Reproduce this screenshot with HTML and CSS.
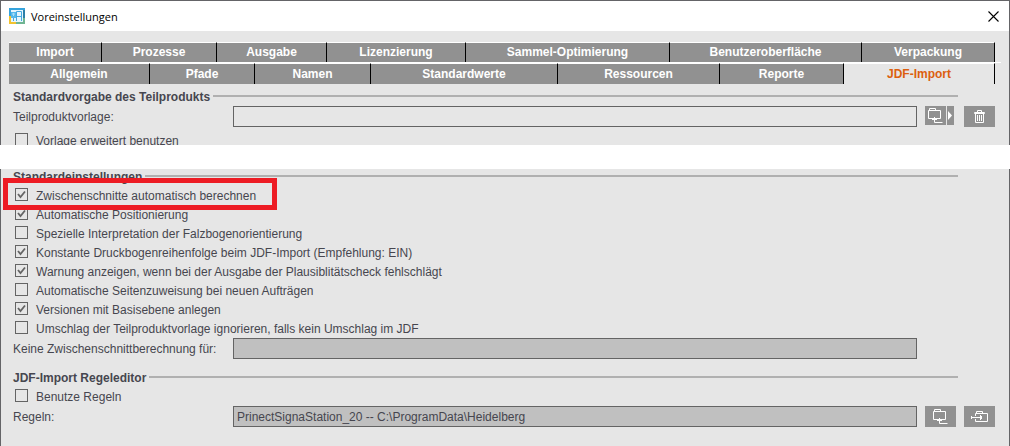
FILE: index.html
```html
<!DOCTYPE html>
<html lang="de">
<head>
    <meta charset="UTF-8">
    <meta name="viewport" content="width=device-width, initial-scale=1.0">
    <title>Voreinstellungen</title>
    <link rel="stylesheet" href="styles.css">
</head>
<body>
    <section class="window window-top">
        <header class="title-bar">
            <svg class="app-icon" width="16" height="16" viewBox="0 0 16 16">
                <path d="M0 0h16v2H2v6H0z" fill="#35a3dc"/>
                <path d="M14 2h2v8h-2z" fill="#2b7fa8"/>
                <path d="M0 8h2v6h5v2H0z" fill="#f2c230"/>
                <path d="M7 14h7v-4h2v6H7z" fill="#6fb592"/>
                <path d="M2 2h12v12H2z" fill="#e4f5fd"/>
                <path d="M2 4h5v6H2z" fill="#53b9ec"/>
                <path d="M7.5 13V3.500h5V13M7.5 8.5h5M4.5 10v3" fill="none" stroke="#45a9df"/>
                <path d="M3 6h3M4.5 5v3" fill="none" stroke="#a9def8"/>
            </svg>
            <h1>Voreinstellungen</h1>
            <button class="close" type="button" aria-label="Schließen">
                <svg width="11" height="11" viewBox="0 0 11 11"><path d="M.5.5l10 10M10.5.5l-10 10" stroke="#000" stroke-width="1.1"/></svg>
            </button>
        </header>

        <nav class="tabs">
            <div class="tab-row tab-row-back">
                <button type="button">Import</button>
                <button type="button">Prozesse</button>
                <button type="button">Ausgabe</button>
                <button type="button">Lizenzierung</button>
                <button type="button">Sammel-Optimierung</button>
                <button type="button">Benutzeroberfläche</button>
                <button type="button">Verpackung</button>
            </div>
            <div class="tab-row tab-row-front">
                <button type="button">Allgemein</button>
                <button type="button">Pfade</button>
                <button type="button">Namen</button>
                <button type="button">Standardwerte</button>
                <button type="button">Ressourcen</button>
                <button type="button">Reporte</button>
                <button type="button" class="active">JDF-Import</button>
            </div>
        </nav>

        <div class="content">
            <h2>Standardvorgabe des Teilprodukts</h2>
            <div class="field">
                <label for="vorlage">Teilproduktvorlage:</label>
                <input type="text" id="vorlage">
                <div class="split-button">
                    <button type="button" aria-label="Vorlage wählen">
                        <svg width="21" height="19" viewBox="0 0 21 19"><path d="M3.5 4.5h12v8h-12zM4.5 4.5v-2h6v2M9.5 11v5.5h8M7 13.5h5"/></svg>
                    </button>
                    <button type="button" class="arrow" aria-label="Verlauf">
                        <svg width="7" height="19" viewBox="0 0 7 19"><path class="solid" d="M1 5l4 4.5L1 14z"/></svg>
                    </button>
                </div>
                <button type="button" class="tool" aria-label="Löschen">
                    <svg width="31" height="21" viewBox="0 0 31 21"><path d="M13.5 6V4.5h4V6M10.5 7.5v-1h10v1zM11.5 8v8.5h8V8M13.5 9v6M15.5 9v6M17.5 9v6"/></svg>
                </button>
            </div>
            <div class="cut-off">
                <label class="check"><input type="checkbox">Vorlage erweitert benutzen</label>
            </div>
        </div>
    </section>

    <section class="window window-bottom">
        <div class="content">
            <h2>Standardeinstellungen</h2>
            <label class="check highlight"><input type="checkbox" checked>Zwischenschnitte automatisch berechnen</label>
            <label class="check"><input type="checkbox" checked>Automatische Positionierung</label>
            <label class="check"><input type="checkbox">Spezielle Interpretation der Falzbogenorientierung</label>
            <label class="check"><input type="checkbox" checked>Konstante Druckbogenreihenfolge beim JDF-Import (Empfehlung: EIN)</label>
            <label class="check"><input type="checkbox" checked>Warnung anzeigen, wenn bei der Ausgabe der Plausiblitätscheck fehlschlägt</label>
            <label class="check"><input type="checkbox">Automatische Seitenzuweisung bei neuen Aufträgen</label>
            <label class="check"><input type="checkbox" checked>Versionen mit Basisebene anlegen</label>
            <label class="check"><input type="checkbox">Umschlag der Teilproduktvorlage ignorieren, falls kein Umschlag im JDF</label>
            <div class="field">
                <label for="keine">Keine Zwischenschnittberechnung für:</label>
                <input type="text" id="keine" disabled>
            </div>

            <h2 class="next-group">JDF-Import Regeleditor</h2>
            <label class="check"><input type="checkbox">Benutze Regeln</label>
            <div class="field">
                <label for="regeln">Regeln:</label>
                <input type="text" id="regeln" value="PrinectSignaStation_20 -- C:\ProgramData\Heidelberg" disabled>
                <button type="button" class="tool" aria-label="Regeln wählen">
                    <svg width="31" height="21" viewBox="0 0 31 21"><path d="M8.5 5.5h12v8h-12zM9.5 5.5v-2h6v2M14.5 12v5.5h8M12 14.5h5"/></svg>
                </button>
                <button type="button" class="tool" aria-label="Regeln importieren">
                    <svg width="31" height="21" viewBox="0 0 31 21"><path d="M11.5 10V7.5h12v8h-12V13M12.5 7.5v-2h6v2M7.5 10v3M7 11.5h11M16.5 9v5M17.5 10v3"/></svg>
                </button>
            </div>
        </div>
    </section>
</body>
</html>
```
FILE: styles.css
```css
:root {
    --panel: #e6e6e6;
    --gray: #919191;
    --line: #646464;
    --text: #46464f;
    --accent: #dc5f0f;
}

* {
    box-sizing: border-box;
}

body {
    margin: 0;
    min-height: 100vh;
    display: flex;
    flex-direction: column;
    gap: 24px;
    background: #fff;
    color: var(--text);
    font-family: "Liberation Sans", Arial, sans-serif;
    font-size: 12px;
}

button {
    margin: 0;
    padding: 0;
    border: none;
    font: inherit;
}

svg {
    display: block;
}

.window {
    background: var(--panel);
    border: 0 solid #646467;
    border-width: 0 1px;
    overflow: hidden;
}

.window-top {
    border-top-width: 1px;
}

.window-bottom {
    flex: 1;
}

.title-bar {
    display: flex;
    align-items: center;
    height: 30px;
    padding: 0 10px 0 8px;
    background: #fff;
}

.title-bar h1 {
    flex: 1;
    margin: 0 0 0 6px;
    color: #000;
    font: 11px "Open Sans", "Noto Sans", sans-serif;
}

.close {
    background: none;
}

/* tabs */
.tabs {
    padding: 11px 8px 0;
}

.tab-row {
    display: grid;
}

.tab-row-back {
    grid-template-columns: 93fr 115fr 110fr 139fr 204fr 192fr 133fr;
    padding-right: 6px;
    border-bottom: 1px solid #fff;
}

.tab-row-front {
    grid-template-columns: 141fr 105fr 116fr 187fr 162fr 124fr 151fr;
    margin-right: 6px;
}

.tab-row button {
    height: 20px;
    border-top: 1px solid #fff;
    border-right: 1px solid #000;
    background: var(--gray);
    color: #fff;
    font-weight: bold;
    line-height: 19px;
}

.tab-row-front button {
    height: 21px;
}

.tab-row .active {
    background: var(--panel);
    color: var(--accent);
}

/* settings */
.content {
    padding: 3px 14px 0 12px;
}

.window-bottom .content {
    padding-top: 0;
    margin-top: -2px;
}

h2 {
    display: flex;
    align-items: center;
    gap: 3px;
    height: 18px;
    margin: 0 37px 0 0;
    padding-top: 2px;
    font-size: 12px;
    font-weight: bold;
}

h2::after {
    content: "";
    flex: 1;
    height: 2px;
    margin-bottom: 2px;
    background: #b0b0b0;
}

.next-group {
    margin-top: 8px;
}

.field {
    display: grid;
    grid-template-columns: 212px 1fr 31px 31px;
    gap: 8px;
    align-items: center;
    height: 23px;
}

.field input {
    width: 100%;
    height: 21px;
    padding: 0 3px;
    border: 1px solid var(--line);
    background: var(--panel);
    color: var(--text);
    font: inherit;
}

.field input:disabled {
    background: #c0c0c0;
}

.tool,
.split-button button {
    background: var(--gray);
}

.split-button {
    display: flex;
    gap: 1px;
    height: 21px;
}

.split-button button {
    height: 19px;
}

.tool path,
.split-button path {
    fill: none;
    stroke: #fff;
}

.split-button .solid {
    fill: #fff;
    stroke: none;
}

.check {
    display: flex;
    align-items: center;
    gap: 8px;
    width: fit-content;
    height: 19px;
    padding: 2px 0 0 2px;
    position: relative;
}

.check input {
    appearance: none;
    width: 13px;
    height: 13px;
    margin: 0 0 2px;
    border: 1px solid var(--line);
}

.check input:checked {
    background: url("data:image/svg+xml,%3Csvg xmlns='http://www.w3.org/2000/svg' viewBox='0 0 11 11'%3E%3Cpath d='M2 5l2.5 3L9 2.5' fill='none' stroke='%23646464' stroke-width='1.8'/%3E%3C/svg%3E");
}

.cut-off {
    height: 17px;
    padding-top: 2px;
    overflow: hidden;
}

/* red marker around the option */
.highlight::after {
    content: "";
    position: absolute;
    inset: -7px -21px -6px -10px;
    z-index: 1;
    border: 5px solid #ed1c24;
}
```
